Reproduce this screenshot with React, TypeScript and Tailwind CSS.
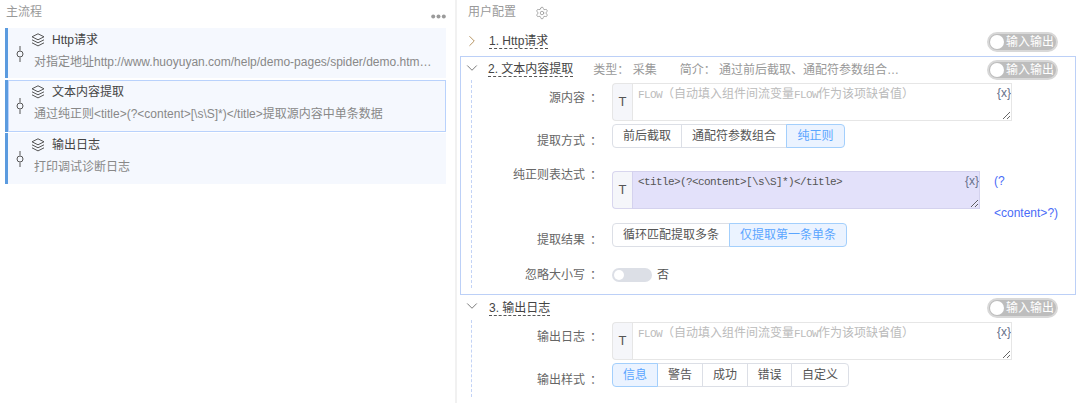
import React from "react";
import { ChevronDown, ChevronRight, Settings } from "lucide-react";

const sans = "font-['Liberation_Sans','Noto_Sans_CJK_SC',sans-serif]";

function LayersIcon() {
  return (
    <svg width="14" height="14" viewBox="0 0 14 14" fill="none" stroke="#555" strokeWidth="1" className="shrink-0">
      <path d="M7 .8 13 3.8 7 6.8 1 3.8Z" />
      <path d="M1 6.8 7 9.8 13 6.8" />
      <path d="M1 9.8 7 12.9 13 9.8" />
    </svg>
  );
}

function NodeIcon() {
  return (
    <svg width="8" height="16" viewBox="0 0 8 16" fill="none" stroke="#555" strokeWidth="1">
      <path d="M4 0V4.5M4 11.5V16" />
      <circle cx="4" cy="8" r="3" />
    </svg>
  );
}

function Card(props: { title: string; desc: string; active?: boolean; cls: string }) {
  return (
    <div className={`flex border-l-[3px] border-l-[#5b9bdf] bg-[#f5f8fe] ${props.cls}`}>
      <div
        className={`flex min-w-0 flex-1 items-center ${
          props.active ? "shadow-[inset_0_0_0_1px_#b9d2fc]" : ""
        }`}
      >
        <div className="flex w-[23px] shrink-0 justify-center">
          <NodeIcon />
        </div>
        <div className={`min-w-0 flex-1 self-start ${props.active ? "pt-[4px]" : "pt-[3px]"}`}>
          <div className="flex h-[16px] items-center text-[12px] text-[#444]">
            <LayersIcon />
            <span className="ml-[7px]">{props.title}</span>
          </div>
          <div className="mt-[6px] ml-[3px] h-[16px] w-[398px] truncate text-[12px] leading-[16px] text-[#888]">
            {props.desc}
          </div>
        </div>
      </div>
    </div>
  );
}

function IOSwitch() {
  return (
    <div className="flex h-[20px] w-[71px] shrink-0 items-center rounded-full border-2 border-[#d8d8d8] bg-[#bdbdbd] pl-[1px]">
      <span className="h-[14px] w-[14px] rounded-full bg-white" />
      <span className="ml-[2px] text-[12px] leading-none whitespace-nowrap text-white">输入输出</span>
    </div>
  );
}

function Title(props: { text: string }) {
  return (
    <span className="border-b border-dashed border-[#555] text-[12px] leading-[14px] whitespace-nowrap text-[#444]">
      {props.text}
    </span>
  );
}

function Label(props: { text: string; cls?: string }) {
  return (
    <div className={`h-[16px] w-[140px] shrink-0 pr-[10px] text-right text-[12px] leading-[16px] text-[#666] ${props.cls ?? ""}`}>
      {props.text}
      <span className="ml-[5px]">：</span>
    </div>
  );
}

function Placeholder() {
  return (
    <div className="text-[12px] leading-[14px] whitespace-nowrap text-[#bbb]">
      <span className="font-['Liberation_Mono'] text-[11px] tracking-[-0.6px]">FLOW</span>（自动填入组件间流变量
      <span className="font-['Liberation_Mono'] text-[11px] tracking-[-0.6px]">FLOW</span>作为该项缺省值）
    </div>
  );
}

function VarTag() {
  return <span className="absolute top-[2px] right-0 text-[12px] leading-[14px] text-[#66708a]">{"{x}"}</span>;
}

function InputBox(props: { children?: React.ReactNode; purple?: boolean; width: string }) {
  return (
    <div className={`flex h-[38px] ${props.width}`}>
      <div
        className={`flex w-[20px] shrink-0 items-center justify-center rounded-l-[4px] border border-r-0 bg-[#f5f6fa] text-[13px] text-[#555] ${
          props.purple ? "border-[#d8d6ee]" : "border-[#e6e6e6]"
        }`}
      >
        T
      </div>
      <div
        className={`relative min-w-0 flex-1 resize overflow-auto border pt-[3px] pl-[5px] ${
          props.purple ? "border-[#d4d2ee] bg-[#e3e1fa]" : "border-[#e6e6e6] bg-white"
        }`}
      >
        {props.children}
        <VarTag />
      </div>
    </div>
  );
}

function Radio(props: { items: { t: string; w: string }[]; active: number }) {
  return (
    <div className="flex h-[24px] text-[12px]">
      {props.items.map((it, i) => {
        const first = i === 0;
        const last = i === props.items.length - 1;
        const on = i === props.active;
        return (
          <div
            key={it.t}
            className={`flex items-center justify-center border ${it.w} ${first ? "rounded-l-[4px]" : "-ml-px"} ${
              last ? "rounded-r-[4px]" : ""
            } ${on ? "z-10 border-[#a3cffc] bg-[#ebf3ff] text-[#5aa5ff]" : "border-[#dcdfe6] bg-white text-[#555]"}`}
          >
            {it.t}
          </div>
        );
      })}
    </div>
  );
}

export default function App() {
  return (
    <div className={`flex h-[403px] w-[1078px] overflow-hidden bg-white ${sans}`}>
      {/* left */}
      <div className="w-[457px] shrink-0 border-r-2 border-[#f1f1f1] pr-[9px] pl-[5px]">
        <div className="flex h-[28px] items-start justify-between">
          <span className="mt-[4px] ml-[1px] text-[12px] leading-[16px] text-[#999]">主流程</span>
          <svg width="15" height="5" viewBox="0 0 15 5" fill="#9a9a9a" className="mt-[14px]">
            <circle cx="2.2" cy="2.5" r="2" />
            <circle cx="7.5" cy="2.5" r="2" />
            <circle cx="12.8" cy="2.5" r="2" />
          </svg>
        </div>
        <Card cls="h-[50px] pt-[1px]" title="Http请求" desc="对指定地址http://www.huoyuyan.com/help/demo-pages/spider/demo.html，获取页面内容" />
        <Card cls="mt-[2px] h-[52px]" active title="文本内容提取" desc="通过纯正则<title>(?<content>[\s\S]*)</title>提取源内容中单条数据" />
        <Card cls="mt-[1px] h-[51px] pt-[1px]" title="输出日志" desc="打印调试诊断日志" />
      </div>

      {/* right */}
      <div className="min-w-0 flex-1 pl-[3px]">
        <div className="flex h-[32px] items-start pl-[8px]">
          <span className="mt-[4px] text-[12px] leading-[16px] text-[#999]">用户配置</span>
          <Settings size={14} strokeWidth={1.4} className="mt-[6px] ml-[19px] text-[#999]" />
        </div>

        <div className="flex h-[19px] w-[616px] items-center pr-[18px] pl-[5px]">
          <ChevronRight size={18} strokeWidth={1.3} className="-mt-[2px] mr-[8px] -ml-[2px] shrink-0 text-[#b5925f]" />
          <Title text="1. Http请求" />
          <div className="ml-auto">
            <IOSwitch />
          </div>
        </div>

        <div className="mt-[5px] h-[239px] w-[616px] border border-[#bcd0f7]">
          <div className="flex h-[23px] items-center pt-[2px] pr-[17px] pl-[4px]">
            <ChevronDown size={18} strokeWidth={1.3} className="-mt-[4px] mr-[7px] -ml-[2px] shrink-0 text-[#777]" />
            <Title text="2. 文本内容提取" />
            <span className="ml-[20px] text-[12px] whitespace-nowrap text-[#999]">类型： 采集</span>
            <span className="ml-[23px] w-[220px] truncate text-[12px] whitespace-nowrap text-[#999]">
              简介： 通过前后截取、通配符参数组合提取源内容
            </span>
            <div className="ml-auto">
              <IOSwitch />
            </div>
          </div>
          <div className="ml-[10px] h-[208px] border-l border-dashed border-[#c3d3f6] pt-[3px]">
            <div className="flex items-start">
              <Label text="源内容" cls="mt-[7px]" />
              <InputBox width="w-[400px]">
                <Placeholder />
              </InputBox>
            </div>
            <div className="mt-[3px] flex items-start">
              <Label text="提取方式" cls="mt-[9px]" />
              <Radio
                active={2}
                items={[
                  { t: "前后截取", w: "w-[70px]" },
                  { t: "通配符参数组合", w: "w-[106px]" },
                  { t: "纯正则", w: "w-[59px]" },
                ]}
              />
            </div>
            <div className="mt-[22px] flex items-start">
              <Label text="纯正则表达式" cls="-mt-[4px]" />
              <InputBox purple width="w-[368px]">
                <div className="font-['Liberation_Mono'] text-[11px] leading-[14px] tracking-[-0.6px] whitespace-nowrap text-[#555]">
                  {"<title>(?<content>[\\s\\S]*)</title>"}
                </div>
              </InputBox>
              <div className="-mt-[6px] ml-[14px] h-[38px] w-[66px] text-[12px] leading-[32px] text-[#4a6cf7]">
                (?
                <br />
                {"<content>?)"}
              </div>
            </div>
            <div className="mt-[14px] flex items-start">
              <Label text="提取结果" cls="mt-[9px]" />
              <Radio
                active={1}
                items={[
                  { t: "循环匹配提取多条", w: "w-[118px]" },
                  { t: "仅提取第一条单条", w: "w-[118px]" },
                ]}
              />
            </div>
            <div className="mt-[18px] flex items-center">
              <Label text="忽略大小写" />
              <div className="flex h-[14px] w-[40px] items-center rounded-full bg-[#dcdfe6] pl-[2px]">
                <span className="h-[10px] w-[10px] rounded-full bg-white" />
              </div>
              <span className="ml-[5px] text-[12px] text-[#555]">否</span>
            </div>
          </div>
        </div>

        <div className="mt-[3px] flex h-[20px] w-[616px] items-center pr-[18px] pl-[5px]">
          <ChevronDown size={18} strokeWidth={1.3} className="-mt-[5px] mr-[8px] -ml-[2px] shrink-0 text-[#777]" />
          <Title text="3. 输出日志" />
          <div className="ml-auto">
            <IOSwitch />
          </div>
        </div>
        <div className="mt-[2px] ml-[11px] h-[77px] border-l border-dashed border-[#c3d3f6] pt-[2px]">
          <div className="flex items-start">
            <Label text="输出日志" cls="mt-[7px]" />
            <InputBox width="w-[400px]">
              <Placeholder />
            </InputBox>
          </div>
          <div className="mt-[3px] flex items-start">
            <Label text="输出样式" cls="mt-[9px]" />
            <Radio
              active={0}
              items={[
                { t: "信息", w: "w-[46px]" },
                { t: "警告", w: "w-[46px]" },
                { t: "成功", w: "w-[46px]" },
                { t: "错误", w: "w-[45px]" },
                { t: "自定义", w: "w-[58px]" },
              ]}
            />
          </div>
        </div>
      </div>
    </div>
  );
}
